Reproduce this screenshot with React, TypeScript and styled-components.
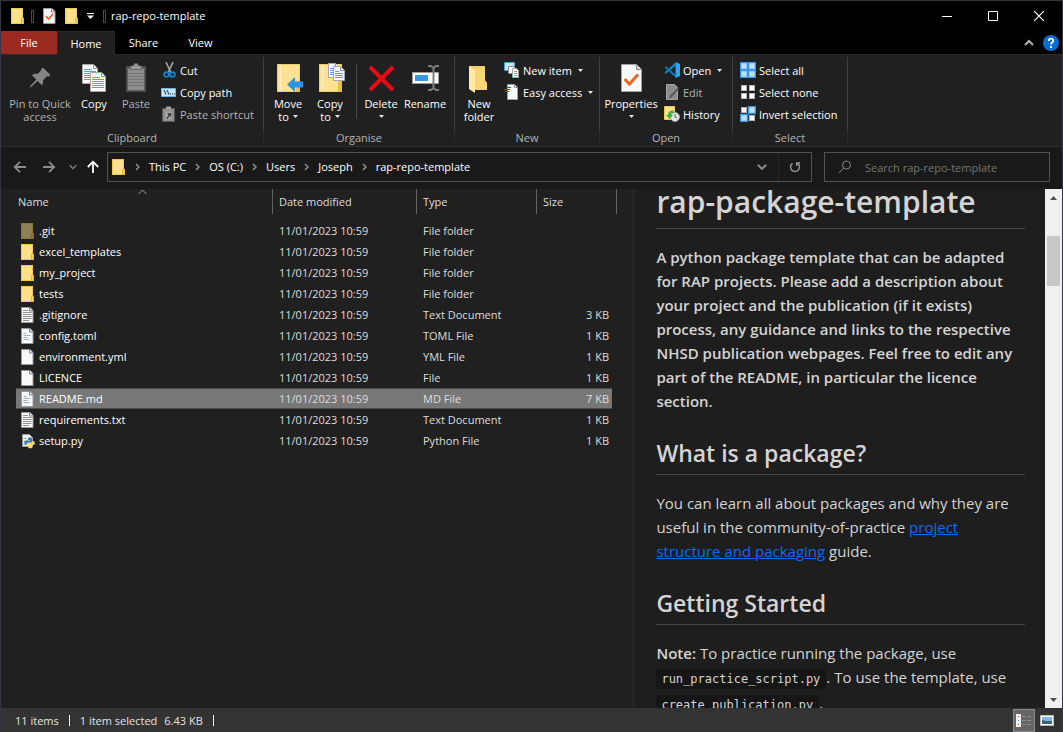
import React from "react";
import styled, { createGlobalStyle, css } from "styled-components";

const GlobalStyle = createGlobalStyle`
  *, *::before, *::after { box-sizing: border-box; }
  body {
    margin: 0;
    background: #000;
    color: #fff;
    font-family: "Open Sans", "Noto Sans", sans-serif;
    font-size: 11px;
  }
  button, input { font: inherit; color: inherit; }
  button { background: none; border: 0; padding: 0; margin: 0; }
  svg { display: block; flex: none; }
`;

/* ---------- window frame ---------- */

const Window = styled.div`
  display: flex;
  flex-direction: column;
  height: 100vh;
  min-height: 480px;
  border: 1px solid #3a3442;
  border-bottom: 0;
  background: #202020;
  overflow: hidden;
`;

const TitleBar = styled.header`
  display: flex;
  align-items: center;
  flex: none;
  height: 30px;
  padding-left: 10px;
  background: #000;
`;

const QuickButton = styled.button<{ $width?: number }>`
  display: flex;
  justify-content: center;
  width: ${(p) => p.$width ?? 22}px;
`;

const TitleRule = styled.span`
  width: 3px;
  height: 13px;
  margin: 0 5px 0 6px;
  border: 1px solid #4a4a4a;
`;

const WindowTitle = styled.h1`
  flex: 1;
  margin: 0;
  font-size: 11px;
  line-height: 16px;
  font-weight: 400;
`;

const CaptionButton = styled.button`
  display: flex;
  align-items: center;
  justify-content: center;
  width: 46px;
  height: 30px;
`;

const TabRow = styled.nav`
  display: flex;
  align-items: stretch;
  flex: none;
  height: 24px;
  background: #000;
  border-bottom: 1px solid #2b2b2b;
`;

const Tab = styled.button<{ $kind?: "file" | "active" }>`
  width: 57px;
  line-height: 23px;
  ${(p) =>
    p.$kind === "file" &&
    css`
      width: 56px;
      background: #9b2b20;
    `}
  ${(p) =>
    p.$kind === "active" &&
    css`
      width: 58px;
      margin-bottom: -1px;
      padding-bottom: 1px;
      background: #202020;
      border: 1px solid #2b2b2b;
      border-bottom: 0;
    `}
`;

const TabTools = styled.div`
  display: flex;
  align-items: center;
  gap: 9px;
  margin-left: auto;
  padding-right: 3px;
`;

/* ---------- ribbon ---------- */

const Ribbon = styled.section`
  display: flex;
  flex: none;
  height: 92px;
  background: #202020;
  border-bottom: 1px solid #2e2e2e;
`;

const Group = styled.div<{ $width: number }>`
  display: flex;
  flex-direction: column;
  flex: none;
  width: ${(p) => p.$width}px;
  margin: 2px 0 3px;
  border-right: 1px solid #2a2a2a;
  border-image: linear-gradient(#404040 0 72px, #2a2a2a 72px) 1;
`;

const GroupBody = styled.div<{ $indent?: number }>`
  display: flex;
  flex: none;
  height: 73px;
  padding: 2px 0 0 ${(p) => p.$indent ?? 3}px;
`;

const GroupLabel = styled.div`
  color: #b4b4b4;
  line-height: 15px;
  text-align: center;
`;

const LargeButton = styled.button<{ $width: number; $muted?: boolean }>`
  display: flex;
  flex-direction: column;
  align-items: center;
  gap: 2px;
  flex: none;
  width: ${(p) => p.$width}px;
  padding-top: 4px;
  line-height: 13px;
  white-space: nowrap;
  color: ${(p) => (p.$muted ? "#b4b4b4" : "#fff")};
`;

const ButtonLine = styled.span`
  display: flex;
  align-items: center;
  justify-content: center;
  gap: 4px;
  min-height: 13px;
`;

const SmallColumn = styled.div<{ $indent?: number }>`
  display: flex;
  flex-direction: column;
  padding-left: ${(p) => p.$indent ?? 0}px;
`;

const SmallButton = styled.button<{ $muted?: boolean }>`
  display: flex;
  align-items: center;
  gap: 3px;
  height: 22px;
  white-space: nowrap;
  color: ${(p) => (p.$muted ? "#b4b4b4" : "#fff")};
`;

const SmallArrow = styled.span`
  padding-left: 3px;
`;

const InnerRule = styled.span`
  width: 1px;
  height: 55px;
  margin: 5px 4px 0 5px;
  background: #4a4a4a;
`;

/* ---------- navigation ---------- */

const NavBar = styled.div`
  display: flex;
  align-items: center;
  flex: none;
  height: 42px;
  padding: 0 12px 2px 6px;
  background: #191919;
`;

const NavButton = styled.button<{ $width: number }>`
  display: flex;
  justify-content: center;
  flex: none;
  width: ${(p) => p.$width}px;
`;

const AddressBox = styled.div`
  display: flex;
  align-items: center;
  flex: 1;
  height: 30px;
  margin: 0 12px 0 2px;
  padding-left: 4px;
  border: 1px solid #535353;
`;

const Crumbs = styled.ol`
  display: flex;
  align-items: center;
  flex: 1;
  margin: 0;
  padding: 0;
  list-style: none;
`;

const Crumb = styled.li`
  display: flex;
  align-items: center;
  line-height: 16px;
  white-space: nowrap;
`;

const CrumbGap = styled.span`
  display: flex;
  justify-content: center;
  width: 23px;
`;

const AddressAction = styled.button<{ $ruled?: boolean }>`
  display: flex;
  align-items: center;
  justify-content: center;
  width: 33px;
  height: 28px;
  border-left: ${(p) => (p.$ruled ? "1px solid #252525" : "0")};
`;

const SearchBox = styled.label`
  display: flex;
  align-items: center;
  gap: 13px;
  flex: 0 1 226px;
  height: 30px;
  padding: 0 13px;
  border: 1px solid #535353;
`;

const SearchInput = styled.input`
  flex: 1;
  min-width: 0;
  padding: 0;
  border: 0;
  outline: 0;
  background: none;
  &::placeholder { color: #757575; opacity: 1; }
`;

/* ---------- file list ---------- */

const Content = styled.main`
  display: flex;
  flex: 1;
  min-height: 0;
`;

const ListPane = styled.section`
  flex: 0 0 59.7%;
  min-width: 0;
  padding-left: 15px;
  border-right: 1px solid #2b2b2b;
  overflow: hidden;
`;

const FileTable = styled.table`
  width: 601px;
  table-layout: fixed;
  border-collapse: separate;
  border-spacing: 0;
  tbody::before {
    content: "";
    display: block;
    height: 6px;
  }
`;

const HeadCell = styled.th<{ $width: number; $first?: boolean }>`
  width: ${(p) => p.$width}px;
  height: 25px;
  padding: 0 0 0 ${(p) => (p.$first ? 2 : 6)}px;
  border-left: ${(p) => (p.$first ? "0" : "1px solid #636363")};
  font-weight: 400;
  color: #dedede;
  text-align: left;
`;

const HeadEnd = styled.td`
  width: 5px;
  border-right: 1px solid #636363;
`;

const HeadName = styled.div`
  display: grid;
  grid-template-columns: 1fr auto 1fr;
  align-items: center;
  padding-right: 5px;
  line-height: 25px;
  svg { align-self: start; }
`;

const Cell = styled.td<{ $right?: boolean }>`
  height: 21px;
  padding: 0 3px 0 7px;
  color: #dedede;
  line-height: 19px;
  white-space: nowrap;
  text-align: ${(p) => (p.$right ? "right" : "left")};
`;

const NameCell = styled(Cell)`
  padding: 0 0 0 5px;
  color: #fff;
`;

const FileName = styled.div`
  display: flex;
  align-items: center;
  gap: 4px;
`;

const FileRow = styled.tr<{ $selected: boolean }>`
  ${(p) =>
    p.$selected &&
    css`
      ${Cell} {
        background: #777;
        box-shadow: inset 0 1px #4d4d4d, inset 0 -1px #4d4d4d;
      }
    `}
`;

/* ---------- preview ---------- */

const PreviewPane = styled.section`
  display: flex;
  flex: 1;
  min-width: 0;
  background: #1e1e1e;
`;

const Article = styled.article`
  flex: 1;
  min-width: 0;
  padding: 0 20px 0 22px;
  overflow: hidden;
  color: #d4d4d4;
  font-size: 15px;
  line-height: 24px;
`;

const DocTitle = styled.h2`
  margin: 0;
  padding-bottom: 13px;
  border-bottom: 1px solid #454545;
  font-size: 30px;
  line-height: 26px;
  font-weight: 600;
`;

const DocHeading = styled.h3`
  margin: 25px 0 0;
  padding-bottom: 6px;
  border-bottom: 1px solid #454545;
  font-size: 23px;
  line-height: 30px;
  font-weight: 600;
`;

const Paragraph = styled.p<{ $strong?: boolean }>`
  margin: 16px 0 0;
  font-weight: ${(p) => (p.$strong ? 600 : 400)};
`;

const Strong = styled.strong`
  font-weight: 600;
`;

const DocLink = styled.a`
  color: #0a6cf0;
  text-decoration: underline;
`;

const Code = styled.code`
  padding: 3px 6px 3px 5px;
  border-radius: 3px;
  background: #161616;
  font-family: "DejaVu Sans Mono", "Liberation Mono", monospace;
  font-size: 12px;
`;

const ScrollBar = styled.div`
  display: flex;
  flex-direction: column;
  align-items: center;
  flex: none;
  width: 17px;
  background: #f0f0f0;
`;

const ScrollButton = styled.button`
  display: flex;
  align-items: center;
  justify-content: center;
  width: 17px;
  height: 17px;
`;

const ScrollTrack = styled.div`
  flex: 1;
  padding-top: 30px;
`;

const ScrollThumb = styled.div`
  width: 13px;
  height: 50px;
  background: #c8c8c8;
`;

/* ---------- status bar ---------- */

const StatusBar = styled.footer`
  display: flex;
  align-items: center;
  gap: 10px;
  flex: none;
  height: 24px;
  padding: 0 4px 0 14px;
  background: #333;
  color: #e4e4e4;
`;

const StatusRule = styled.span`
  width: 1px;
  height: 11px;
  background: #fff;
`;

const StatusSelection = styled.span`
  display: flex;
  gap: 7px;
`;

const ViewButtons = styled.div`
  display: flex;
  gap: 1px;
  margin-left: auto;
`;

const ViewButton = styled.button<{ $on?: boolean }>`
  display: flex;
  align-items: center;
  justify-content: center;
  width: 22px;
  height: 23px;
  border: 1px solid ${(p) => (p.$on ? "#8a8a8a" : "transparent")};
  background: ${(p) => (p.$on ? "#666" : "none")};
`;

/* ---------- icons ---------- */

const FolderIcon = ({ faded = false }: { faded?: boolean }) => (
  <svg width="14" height="16" viewBox="0 0 14 16" opacity={faded ? 0.5 : 1}>
    <path d="M0 0h12v10h1v6H0z" fill="#ffe08a" />
    <path d="M.5.5h11V10M.5.5v15h12" fill="none" stroke="#f1c84b" />
    <path d="M10.500 15V10.500l2-.5v5.500z" fill="#f8d668" stroke="#e3b62f" />
  </svg>
);

type DocKind = "blank" | "lines" | "short" | "check";

const DocIcon = ({ kind }: { kind: DocKind }) => (
  <svg width="14" height="16" viewBox="0 0 14 16">
    <path d="M.5.5h8.500l3 3v12H.5z" fill="#f7f9fa" stroke="#9a9a9a" />
    <path d="M8.500.5v3.500h3.500" fill="#dcdcdc" stroke="#8a8a8a" />
    {kind === "lines" && <path d="M2 3.500h5M2 5.500h8.500M2 7.500h8.500M2 9.500h8.500M2 11.500h8.500M2 13.500h6" stroke="#909090" />}
    {kind === "short" && <path d="M2.500 5.500h3M2.500 7.500h7M2.500 9.500h4M2.500 11.500h6" stroke="#a5abb2" />}
    {kind === "check" && <path d="M3 8l2.500 3 4.500-5" fill="none" stroke="#f05a1a" strokeWidth="1.700" />}
  </svg>
);

const PythonIcon = () => (
  <svg width="14" height="16" viewBox="0 0 14 16">
    <path d="M1.500 1.500h7l3 3v9h-10z" fill="#eef0f2" stroke="#9a9a9a" />
    <path d="M2.500 5.500h3M2.500 8.500h2M2.500 11.500h2" stroke="#a0a0a0" />
    <path d="M7 5.500c0-1.200 4-1.200 4 0v4H7.500c-1 0-1.500.7-1.500 2H4.500C3 11.500 3 7.500 4.500 7.500H9V7H7z" fill="#3b78b4" />
    <path d="M11.500 8h1c1.700 0 1.700 4 0 4H9v.7h2.500V14c0 1.700-4.500 1.700-4.500 0v-2.500c0-1 .5-1.500 1.500-1.500h2c.7 0 1-.5 1-2z" fill="#ffd94f" />
  </svg>
);

const Caret = () => (
  <svg width="5" height="3" viewBox="0 0 5 3">
    <path d="M0 0h5L2.500 3z" fill="#e6e6e6" />
  </svg>
);

const CrumbChevron = () => (
  <svg width="5" height="8" viewBox="0 0 5 8">
    <path d="M1 1l3 3-3 3" fill="none" stroke="#8f8f8f" strokeWidth="1.500" />
  </svg>
);

const DownChevron = ({ color, size = 9 }: { color: string; size?: number }) => (
  <svg width={size} height={size} viewBox="0 0 9 9">
    <path d="M.8 2.500l3.700 3.700 3.700-3.700" fill="none" stroke={color} strokeWidth="1.800" />
  </svg>
);

const Arrow = ({ turn, color }: { turn: number; color: string }) => (
  <svg width="14" height="14" viewBox="0 0 14 14">
    <path d="M13 7H2M7 1.800L1.800 7 7 12.200" fill="none" stroke={color} strokeWidth="1.800" transform={`rotate(${turn} 7 7)`} />
  </svg>
);

const PinIcon = () => (
  <svg width="32" height="32" viewBox="0 0 32 32">
    <path d="M19.500 5l7 7-1.500 1.500-2-.3-4 4c.5 2 0 3.800-1.200 5L13.500 18 7 24l-1.500.8L6.300 23l6-6.500-4.300-4.300C9.500 11 11.500 10.500 13.500 11l4-4-.3-1.800z" fill="#858585" />
  </svg>
);

const Page = ({ x, y, w = 14, h = 18 }: { x: number; y: number; w?: number; h?: number }) => (
  <g transform={`translate(${x} ${y})`}>
    <path d={`M.5.5h${w - 5}l4 4v${h - 5}H.5z`} fill="#f8fbff" stroke="#a8a8a8" />
    <path d={`M${w - 4.5}.5v4h4`} fill="#fff" stroke="#8e8e8e" />
    <path d={`M2 5.500h${w - 8}M2 7.500h${w - 4}M2 9.500h${w - 4}M2 11.500h${w - 4}${h > 16 ? `M2 13.500h${w - 4}M2 15.500h${w - 4}` : ""}`} stroke="#5c9ae8" />
  </g>
);

const CopyIcon = () => (
  <svg width="32" height="32" viewBox="0 0 32 32">
    <Page x={4} y={1} w={16} h={20} />
    <Page x={12} y={9} w={16} h={20} />
  </svg>
);

const PasteIcon = () => (
  <svg width="32" height="32" viewBox="0 0 32 32">
    <path d="M6.500 3.500h19v25h-19z" fill="#5d5d5d" stroke="#484848" />
    <path d="M8 6h16v21H8z" fill="#8d8d8d" />
    <path d="M8 10.500h16M8 13.500h16M8 16.500h16M8 19.500h16M8 22.500h16" stroke="#747474" />
    <path d="M10.500 3h3a2.500 2.500 0 015 0h3v3.500h-11z" fill="#9a9a9a" stroke="#666" />
  </svg>
);

const LargeFolder = ({ children }: { children?: React.ReactNode }) => (
  <svg width="32" height="32" viewBox="0 0 32 32">
    <path d="M5 1h23v28H5z" fill="#f3cd60" />
    <path d="M6 2h21v26H6z" fill="#ffe293" />
    <path d="M8.500 2v26" stroke="#fff0bd" />
    <path d="M24 18h4v11h-4z" fill="#e9bf48" />
    {children}
  </svg>
);

const MoveIcon = () => (
  <LargeFolder>
    <path d="M15 21.500l8-7.500v4.500h8v6h-8V29z" fill="#3193e3" />
  </LargeFolder>
);

const CopyToIcon = () => (
  <LargeFolder>
    <Page x={14} y={0} w={12} h={15} />
    <Page x={19} y={3} w={12} h={15} />
  </LargeFolder>
);

const DeleteIcon = () => (
  <svg width="32" height="32" viewBox="0 0 32 32">
    <path d="M5 4l23 23M28 4L5 27" stroke="#e60c14" strokeWidth="4" />
  </svg>
);

const RenameIcon = () => (
  <svg width="32" height="32" viewBox="0 0 32 32">
    <path d="M3.500 9.500h26v11h-26z" fill="#fff" stroke="#9b9b9b" />
    <path d="M6 12h13v6H6z" fill="#3598e8" />
    <path d="M19 3h3l2.500 2 2.500-2h3M24.500 4v22M19 27h3l2.500-2 2.500 2h3" fill="none" stroke="#7c7c7c" strokeWidth="2" />
  </svg>
);

const NewFolderIcon = () => (
  <svg width="32" height="32" viewBox="0 0 32 32">
    <path d="M6 3h15v14l3 3v7H8z" fill="#f3cf64" />
    <path d="M11 8l11-5v14l2 3v6H11z" fill="#f7d775" />
    <path d="M6 3l6 4v23l-6-4z" fill="#ffe9a4" />
  </svg>
);

const PropertiesIcon = () => (
  <svg width="32" height="32" viewBox="0 0 32 32">
    <path d="M6.500 1.500h15l5 5v22h-20z" fill="#f7f8f9" stroke="#a2a2a2" />
    <path d="M21.500 1.500v5h5" fill="#ddd" stroke="#888" />
    <path d="M9.500 16l5 5L23 11.500" fill="none" stroke="#f26522" strokeWidth="3" />
  </svg>
);

const CutIcon = () => (
  <svg width="16" height="16" viewBox="0 0 16 16">
    <path d="M5 0l5 11M12 0L7 11" stroke="#a5a5a5" strokeWidth="1.600" />
    <circle cx="5.500" cy="12.500" r="2.400" fill="none" stroke="#1c80cc" strokeWidth="1.800" />
    <circle cx="11.500" cy="12.500" r="2.400" fill="none" stroke="#1c80cc" strokeWidth="1.800" />
  </svg>
);

const CopyPathIcon = () => (
  <svg width="16" height="16" viewBox="0 0 16 16">
    <path d="M.5 4.500h14v8H.5z" fill="#c5e5ff" stroke="#6fb1e8" />
    <path d="M3 6l2 4.500M6 6l2 4.500M9 10h1M11 10h1M13 10h1" stroke="#10283c" />
  </svg>
);

const PasteShortcutIcon = () => (
  <svg width="16" height="16" viewBox="0 0 16 16">
    <path d="M1.500 2.500h12v13h-12z" fill="#8e8e8e" stroke="#585858" />
    <path d="M5 .5h5v3H5z" fill="#a0a0a0" />
    <path d="M4.500 5.500h6v8h-6z" fill="#a9a9a9" />
    <path d="M6 7h4v4L8.700 9.700 6.500 13 5.500 12l2.200-3.200z" fill="#3a3a3a" />
  </svg>
);

const NewItemIcon = () => (
  <svg width="16" height="16" viewBox="0 0 16 16">
    <path d="M.5.500h10v8H.5z" fill="#c9e6f8" stroke="#4b9cc8" />
    <path d="M4.500 4.500h6v7h-6z" fill="#fff" stroke="#8a8a8a" />
    <path d="M8.500 6.500h4l2 2v7h-6z" fill="#fff" stroke="#a5a5a5" />
    <path d="M10 9.500h3M10 11.500h3M10 13.500h3" stroke="#dd8a8a" />
  </svg>
);

const EasyAccessIcon = () => (
  <svg width="16" height="16" viewBox="0 0 16 16">
    <path d="M3.500.5h7l3 3v12h-10z" fill="#f7f8f9" stroke="#a0a0a0" />
    <path d="M10.500.5v3h3" fill="none" stroke="#888" />
    <path d="M2 3.500h5M0 5.500h6M1 7.500h4" stroke="#1c66a8" />
  </svg>
);

const CodeIcon = () => (
  <svg width="16" height="16" viewBox="0 0 16 16">
    <path d="M11.500 3.500L2 11.800.5 10.500l11-10z" fill="#1287d2" />
    <path d="M11.500 12.500L2 4.200.5 5.500l11 10z" fill="#0a76bd" />
    <path d="M11.500 0L16 2v12l-4.500 2z" fill="#2ba6f2" />
  </svg>
);

const EditIcon = () => (
  <svg width="16" height="16" viewBox="0 0 16 16">
    <path d="M2.500.5h8l3 3v12h-11z" fill="#8c8c8c" stroke="#a5a5a5" />
    <path d="M15 5l-7 8-3 2 1-3.500L13.500 4z" fill="#5c5c5c" />
  </svg>
);

const HistoryIcon = () => (
  <svg width="16" height="16" viewBox="0 0 16 16">
    <path d="M.5.5h10v13H.5z" fill="#ffe08a" stroke="#f1c84b" />
    <circle cx="11" cy="11" r="4.500" fill="#e4e8e8" stroke="#9a9a9a" />
    <path d="M11 8v3l2 1" fill="none" stroke="#555" />
    <path d="M9 4.500C5 4.500 4 7 4 9H2l3.500 4L9 9H7c0-1.500 1-2.500 3.500-2.500z" fill="#36b34a" />
  </svg>
);

const SelectIcon = ({ on, all = false }: { on: boolean[]; all?: boolean }) => (
  <svg width="16" height="16" viewBox="0 0 16 16">
    {all && <path d="M0 0h16v16H0z" fill="#3a97e8" />}
    {on.map((lit, i) => {
      const x = (i % 2) * 8;
      const y = Math.floor(i / 2) * 8;
      return lit ? (
        <rect key={i} x={x + 0.5} y={y + 0.5} width="7" height="7" fill="#b9dffb" stroke="#3a97e8" strokeWidth="1.500" />
      ) : (
        <rect key={i} x={x + 1.5} y={y + 1.5} width="5" height="5" fill="#fff" stroke="#b5b5b5" />
      );
    })}
  </svg>
);

/* ---------- data ---------- */

type FileEntry = { name: string; type: string; size?: string; icon: React.ReactNode };

const files: FileEntry[] = [
  { name: ".git", type: "File folder", icon: <FolderIcon faded /> },
  { name: "excel_templates", type: "File folder", icon: <FolderIcon /> },
  { name: "my_project", type: "File folder", icon: <FolderIcon /> },
  { name: "tests", type: "File folder", icon: <FolderIcon /> },
  { name: ".gitignore", type: "Text Document", size: "3 KB", icon: <DocIcon kind="lines" /> },
  { name: "config.toml", type: "TOML File", size: "1 KB", icon: <DocIcon kind="short" /> },
  { name: "environment.yml", type: "YML File", size: "1 KB", icon: <DocIcon kind="blank" /> },
  { name: "LICENCE", type: "File", size: "1 KB", icon: <DocIcon kind="blank" /> },
  { name: "README.md", type: "MD File", size: "7 KB", icon: <DocIcon kind="short" /> },
  { name: "requirements.txt", type: "Text Document", size: "1 KB", icon: <DocIcon kind="lines" /> },
  { name: "setup.py", type: "Python File", size: "1 KB", icon: <PythonIcon /> },
];

const crumbs = ["This PC", "OS (C:)", "Users", "Joseph", "rap-repo-template"];

/* ---------- app ---------- */

export default function App() {
  return (
    <>
      <GlobalStyle />
      <Window>
        <TitleBar>
          <QuickButton $width={14} aria-label="Folder"><FolderIcon /></QuickButton>
          <TitleRule />
          <QuickButton aria-label="Properties"><DocIcon kind="check" /></QuickButton>
          <QuickButton aria-label="New folder"><FolderIcon /></QuickButton>
          <QuickButton $width={14} aria-label="Customise Quick Access Toolbar">
            <svg width="7" height="6" viewBox="0 0 7 6">
              <path d="M0 .5h7" stroke="#fff" />
              <path d="M0 2.500h7L3.500 6z" fill="#fff" />
            </svg>
          </QuickButton>
          <TitleRule />
          <WindowTitle>rap-repo-template</WindowTitle>
          <CaptionButton aria-label="Minimise">
            <svg width="10" height="10" viewBox="0 0 10 10"><path d="M0 5.500h10" stroke="#fff" /></svg>
          </CaptionButton>
          <CaptionButton aria-label="Maximise">
            <svg width="10" height="10" viewBox="0 0 10 10"><path d="M.5.5h9v9h-9z" fill="none" stroke="#fff" /></svg>
          </CaptionButton>
          <CaptionButton aria-label="Close">
            <svg width="10" height="10" viewBox="0 0 10 10"><path d="M0 0l10 10M10 0L0 10" stroke="#fff" strokeWidth="1.200" /></svg>
          </CaptionButton>
        </TitleBar>

        <TabRow>
          <Tab $kind="file">File</Tab>
          <Tab $kind="active">Home</Tab>
          <Tab>Share</Tab>
          <Tab>View</Tab>
          <TabTools>
            <button aria-label="Collapse ribbon">
              <svg width="10" height="7" viewBox="0 0 10 7"><path d="M1 6l4-4 4 4" fill="none" stroke="#b5b5b5" strokeWidth="2" /></svg>
            </button>
            <button aria-label="Help">
              <svg width="16" height="16" viewBox="0 0 16 16">
                <circle cx="8" cy="8" r="8" fill="#0a6ed1" />
                <path d="M5.800 6c0-3 4.400-3 4.400-.3C10.200 7.500 8 7.500 8 9.500" fill="none" stroke="#fff" strokeWidth="1.800" />
                <path d="M7 11h2v2H7z" fill="#fff" />
              </svg>
            </button>
          </TabTools>
        </TabRow>

        <Ribbon>
          <Group $width={263}>
            <GroupBody>
              <LargeButton $width={72} $muted><PinIcon /><span>Pin to Quick<br />access</span></LargeButton>
              <LargeButton $width={36}><CopyIcon />Copy</LargeButton>
              <LargeButton $width={48} $muted><PasteIcon />Paste</LargeButton>
              <SmallColumn $indent={1}>
                <SmallButton><CutIcon />Cut</SmallButton>
                <SmallButton><CopyPathIcon />Copy path</SmallButton>
                <SmallButton $muted><PasteShortcutIcon />Paste shortcut</SmallButton>
              </SmallColumn>
            </GroupBody>
            <GroupLabel>Clipboard</GroupLabel>
          </Group>
          <Group $width={191}>
            <GroupBody>
              <LargeButton $width={42}><MoveIcon /><span>Move<ButtonLine>to <Caret /></ButtonLine></span></LargeButton>
              <LargeButton $width={42}><CopyToIcon /><span>Copy<ButtonLine>to <Caret /></ButtonLine></span></LargeButton>
              <InnerRule />
              <LargeButton $width={40}><DeleteIcon /><span>Delete<ButtonLine><Caret /></ButtonLine></span></LargeButton>
              <LargeButton $width={48}><RenameIcon />Rename</LargeButton>
            </GroupBody>
            <GroupLabel>Organise</GroupLabel>
          </Group>
          <Group $width={145}>
            <GroupBody>
              <LargeButton $width={42}><NewFolderIcon /><span>New<br />folder</span></LargeButton>
              <SmallColumn $indent={4}>
                <SmallButton><NewItemIcon />New item<SmallArrow><Caret /></SmallArrow></SmallButton>
                <SmallButton><EasyAccessIcon />Easy access<SmallArrow><Caret /></SmallArrow></SmallButton>
              </SmallColumn>
            </GroupBody>
            <GroupLabel>New</GroupLabel>
          </Group>
          <Group $width={133}>
            <GroupBody>
              <LargeButton $width={56}><PropertiesIcon /><span>Properties<ButtonLine><Caret /></ButtonLine></span></LargeButton>
              <SmallColumn $indent={5}>
                <SmallButton><CodeIcon />Open<SmallArrow><Caret /></SmallArrow></SmallButton>
                <SmallButton $muted><EditIcon />Edit</SmallButton>
                <SmallButton><HistoryIcon />History</SmallButton>
              </SmallColumn>
            </GroupBody>
            <GroupLabel>Open</GroupLabel>
          </Group>
          <Group $width={115}>
            <GroupBody $indent={7}>
              <SmallColumn>
                <SmallButton><SelectIcon all on={[true, true, true, true]} />Select all</SmallButton>
                <SmallButton><SelectIcon on={[false, false, false, false]} />Select none</SmallButton>
                <SmallButton><SelectIcon on={[false, true, true, false]} />Invert selection</SmallButton>
              </SmallColumn>
            </GroupBody>
            <GroupLabel>Select</GroupLabel>
          </Group>
        </Ribbon>

        <NavBar>
          <NavButton $width={26} aria-label="Back"><Arrow turn={0} color="#8c8c8c" /></NavButton>
          <NavButton $width={32} aria-label="Forward"><Arrow turn={180} color="#8c8c8c" /></NavButton>
          <NavButton $width={16} aria-label="Recent locations"><DownChevron color="#757575" size={8} /></NavButton>
          <NavButton $width={24} aria-label="Up"><Arrow turn={90} color="#fff" /></NavButton>
          <AddressBox>
            <FolderIcon />
            <Crumbs>
              {crumbs.map((name) => (
                <Crumb key={name}><CrumbGap><CrumbChevron /></CrumbGap>{name}</Crumb>
              ))}
            </Crumbs>
            <AddressAction aria-label="Previous locations"><DownChevron color="#8c8c8c" size={10} /></AddressAction>
            <AddressAction $ruled aria-label="Refresh">
              <svg width="12" height="12" viewBox="0 0 12 12">
                <path d="M3.500 2.300A4.500 4.500 0 108.500 2.300" fill="none" stroke="#959595" strokeWidth="1.500" />
                <path d="M7.700 5V2H11" fill="none" stroke="#959595" strokeWidth="1.500" />
              </svg>
            </AddressAction>
          </AddressBox>
          <SearchBox>
            <svg width="14" height="14" viewBox="0 0 14 14">
              <circle cx="8.500" cy="5" r="4" fill="none" stroke="#858585" />
              <path d="M5.700 8L1 13" stroke="#858585" />
            </svg>
            <SearchInput type="text" aria-label="Search" placeholder="Search rap-repo-template" />
          </SearchBox>
        </NavBar>

        <Content>
          <ListPane>
            <FileTable>
              <thead>
                <tr>
                  <HeadCell $width={256} $first>
                    <HeadName>
                      <span>Name</span>
                      <svg width="9" height="6" viewBox="0 0 9 6"><path d="M.5 5l4-4 4 4" fill="none" stroke="#a5a5a5" /></svg>
                    </HeadName>
                  </HeadCell>
                  <HeadCell $width={144}>Date modified</HeadCell>
                  <HeadCell $width={120}>Type</HeadCell>
                  <HeadCell $width={76}>Size</HeadCell>
                  <HeadEnd />
                </tr>
              </thead>
              <tbody>
                {files.map((f) => (
                  <FileRow key={f.name} $selected={f.name === "README.md"}>
                    <NameCell><FileName>{f.icon}{f.name}</FileName></NameCell>
                    <Cell>11/01/2023 10:59</Cell>
                    <Cell>{f.type}</Cell>
                    <Cell $right>{f.size}</Cell>
                  </FileRow>
                ))}
              </tbody>
            </FileTable>
          </ListPane>

          <PreviewPane>
            <Article>
              <DocTitle>rap-package-template</DocTitle>
              <Paragraph $strong>
                A python package template that can be adapted for RAP projects. Please add a description about your
                project and the publication (if it exists) process, any guidance and links to the respective NHSD
                publication webpages. Feel free to edit any part of the README, in particular the licence section.
              </Paragraph>
              <DocHeading>What is a package?</DocHeading>
              <Paragraph>
                You can learn all about packages and why they are useful in the community-of-practice{" "}
                <DocLink href="#structure">project structure and packaging</DocLink> guide.
              </Paragraph>
              <DocHeading>Getting Started</DocHeading>
              <Paragraph>
                <Strong>Note:</Strong> To practice running the package, use <Code>run_practice_script.py</Code>. To use
                the template, use <Code>create_publication.py</Code>.
              </Paragraph>
            </Article>
            <ScrollBar>
              <ScrollButton aria-label="Scroll up">
                <svg width="7" height="4" viewBox="0 0 7 4"><path d="M0 4l3.500-4L7 4z" fill="#505050" /></svg>
              </ScrollButton>
              <ScrollTrack><ScrollThumb /></ScrollTrack>
              <ScrollButton aria-label="Scroll down">
                <svg width="7" height="4" viewBox="0 0 7 4"><path d="M0 0l3.500 4L7 0z" fill="#505050" /></svg>
              </ScrollButton>
            </ScrollBar>
          </PreviewPane>
        </Content>

        <StatusBar>
          <span>11 items</span>
          <StatusRule />
          <StatusSelection><span>1 item selected</span><span>6.43 KB</span></StatusSelection>
          <StatusRule />
          <ViewButtons>
            <ViewButton $on aria-label="Details view">
              <svg width="16" height="13" viewBox="0 0 16 13">
                <path d="M0 0h5v13H0z" fill="#f2f2f2" />
                <path d="M2 2h1v1H2zM2 10h1v1H2z" fill="#a33" />
                <path d="M2 6h1v1H2z" fill="#37c" />
                <path d="M6 2.500h4M11 2.500h4M6 6.500h4M11 6.500h4M6 10.500h4M11 10.500h4" stroke="#8d8d8d" />
              </svg>
            </ViewButton>
            <ViewButton aria-label="Large thumbnails view">
              <svg width="14" height="11" viewBox="0 0 14 11">
                <path d="M.5.5h13v10H.5z" fill="#fff" stroke="#bdbdbd" />
                <path d="M2 2h10v4H2z" fill="#7fb7ee" />
                <path d="M2 5l4 1h6v3H2z" fill="#3d6570" />
              </svg>
            </ViewButton>
          </ViewButtons>
        </StatusBar>
      </Window>
    </>
  );
}
